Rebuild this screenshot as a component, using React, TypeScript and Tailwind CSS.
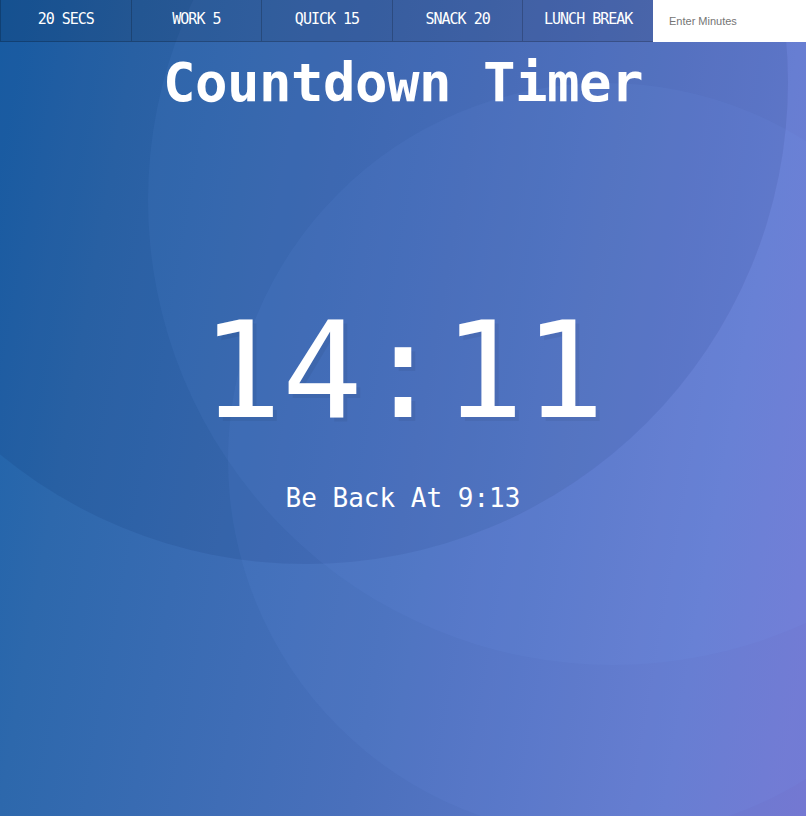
import React from "react";

const presets = ["20 SECS", "WORK 5", "QUICK 15", "SNACK 20", "LUNCH BREAK"];

export default function App() {
  return (
    <div className="relative h-[816px] w-full overflow-hidden bg-[linear-gradient(100deg,#1a62aa_0%,#2d68ac_15%,#4a70bc_52%,#667bcf_85%,#7478d2_100%)] font-['DejaVu_Sans_Mono',monospace] text-white">
      {/* background circles */}
      <div className="pointer-events-none absolute left-[-176px] top-[-400px] h-[964px] w-[964px] rounded-full bg-[rgba(0,30,90,0.1)]" />
      <div className="pointer-events-none absolute left-[148px] top-[-265px] h-[930px] w-[930px] rounded-full bg-[rgba(130,170,255,0.07)]" />
      <div className="pointer-events-none absolute left-[228px] top-[83px] h-[754px] w-[754px] rounded-full bg-[rgba(130,170,255,0.07)]" />

      <div className="relative flex flex-col items-center">
        <div className="grid w-full grid-cols-[repeat(5,1fr)_153px]">
          {presets.map((p) => (
            <button
              key={p}
              className="h-[42px] border-b border-l border-black/20 bg-black/10 pb-[2px] text-[15px] tracking-[-1px] text-white"
            >
              {p}
            </button>
          ))}
          <input
            placeholder="Enter Minutes"
            className="h-[42px] w-full bg-white pl-4 font-['Liberation_Sans',Arial,sans-serif] text-[11px] text-gray-700 outline-none placeholder:text-[#757575]"
          />
        </div>

        <h1 className="mt-[14px] text-[54px] font-bold leading-none tracking-[-0.5px]">
          Countdown Timer
        </h1>

        <div className="mt-[194px] text-[134px] leading-none [text-shadow:4px_4px_0_rgba(0,0,0,0.05)]">
          14:11
        </div>

        <p className="mt-[47px] text-[26px] leading-none">
          Be Back At 9:13
        </p>
      </div>
    </div>
  );
}
